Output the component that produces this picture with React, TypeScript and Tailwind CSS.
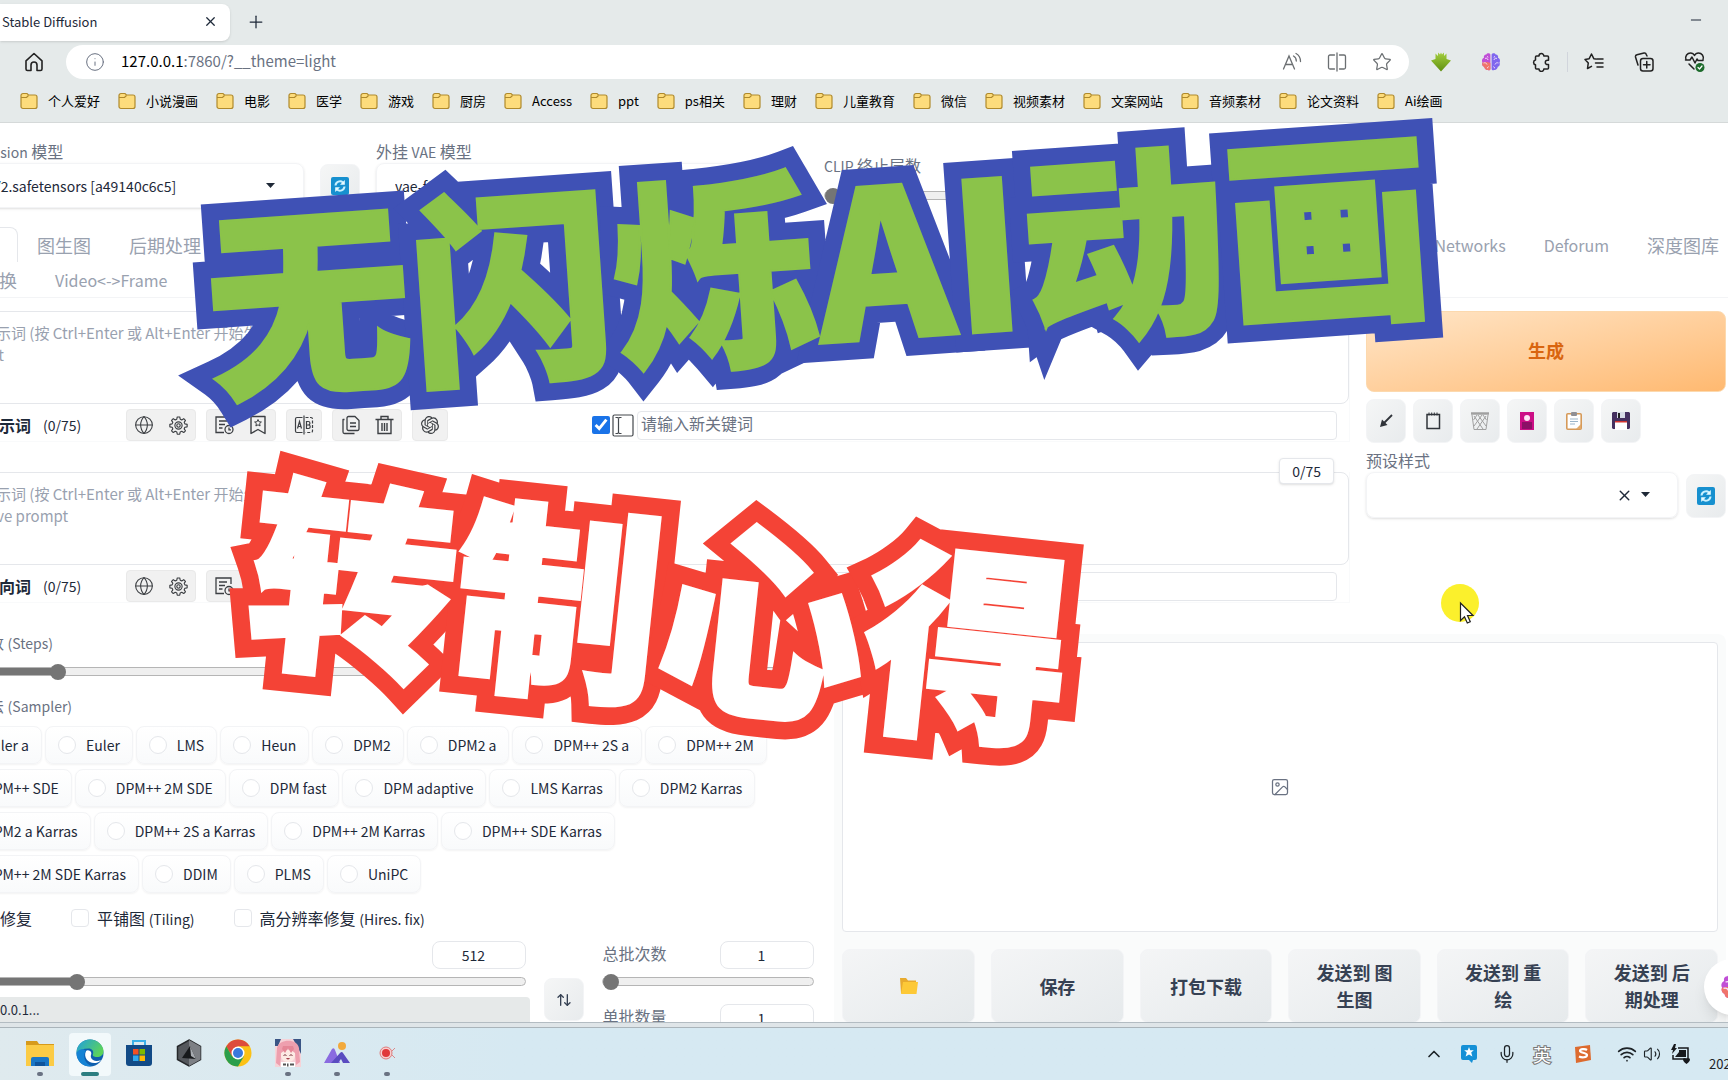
import React, { useState } from 'react';
import {
  ArrowDownUp,
  ChevronUp,
  Globe,
  Image as ImageIcon,
  Info,
  Mic,
  Minus,
  Plus,
  Star,
  Volume2,
  Wifi,
  X,
} from 'lucide-react';
import { SiOpenai } from 'react-icons/si';

const BOOKMARKS = [
  '个人爱好', '小说漫画', '电影', '医学', '游戏', '厨房', 'Access', 'ppt', 'ps相关',
  '理财', '儿童教育', '微信', '视频素材', '文案网站', '音频素材', '论文资料', 'Ai绘画',
];

const SAMPLERS = [
  ['Euler a', 'Euler', 'LMS', 'Heun', 'DPM2', 'DPM2 a', 'DPM++ 2S a', 'DPM++ 2M'],
  ['DPM++ SDE', 'DPM++ 2M SDE', 'DPM fast', 'DPM adaptive', 'LMS Karras', 'DPM2 Karras'],
  ['DPM2 a Karras', 'DPM++ 2S a Karras', 'DPM++ 2M Karras', 'DPM++ SDE Karras'],
  ['DPM++ 2M SDE Karras', 'DDIM', 'PLMS', 'UniPC'],
];

/* ---------- icons ---------- */

const FolderIcon = () => (
  <svg width="18" height="18" viewBox="0 0 18 18" className="shrink-0">
    <path d="M1 3.500a2 2 0 0 1 2-2h4l1.500 1.500H15a2 2 0 0 1 2 2V14.500a2 2 0 0 1-2 2H3a2 2 0 0 1-2-2z" fill="#fddc7c" stroke="#b08a2c" strokeWidth="1.2" />
    <path d="M1 5.500h5.500L8.500 3.500" fill="none" stroke="#b08a2c" strokeWidth="1.2" />
  </svg>
);

const HomeIcon = () => (
  <svg width="20" height="20" viewBox="0 0 20 20" fill="none" stroke="#222" strokeWidth="1.6" strokeLinejoin="round">
    <path d="M2 8.800 10 1.500l8 7.300V17a1.500 1.500 0 0 1-1.500 1.500H13v-5.500a3 3 0 0 0-6 0v5.500H3.500A1.500 1.500 0 0 1 2 17z" />
  </svg>
);

const ReadAloudIcon = () => (
  <svg width="20" height="20" viewBox="0 0 20 20" fill="none" stroke="#6b6f72" strokeWidth="1.3" strokeLinecap="round">
    <path d="M1.500 17 7 4l5.500 13M3.500 12.500h7M11.500 4c1.800 1 2.800 2.800 2.800 5M14 1.500c2.800 1.500 4.500 4.200 4.500 8" />
  </svg>
);

const SplitIcon = () => (
  <svg width="20" height="20" viewBox="0 0 20 20" fill="none" stroke="#6b6f72" strokeWidth="1.3" strokeLinecap="round">
    <path d="M7.500 3H3a1.500 1.500 0 0 0-1.500 1.500v11A1.500 1.500 0 0 0 3 17h4.500M12.500 3H17a1.500 1.500 0 0 1 1.500 1.500v11A1.500 1.500 0 0 1 17 17h-4.500M10 1v18" />
  </svg>
);

const PuzzleIcon = () => (
  <svg width="20" height="20" viewBox="0 0 20 20" fill="none" stroke="#222" strokeWidth="1.5" strokeLinejoin="round">
    <path d="M8 4a2.400 2.400 0 0 1 4.800 0h3.700a1 1 0 0 1 1 1v3.200h-1a2.200 2.200 0 0 0 0 4.400h1V16a1 1 0 0 1-1 1h-3.700a2.400 2.400 0 0 1-4.800 0H5.500a1 1 0 0 1-1-1v-3.200a2.400 2.400 0 0 1 0-4.700V5a1 1 0 0 1 1-1z" />
  </svg>
);

const DownloadArrowIcon = () => (
  <svg width="20" height="20" viewBox="0 0 20 20">
    <defs>
      <linearGradient id="dl" x1="0" y1="0" x2="0" y2="1">
        <stop offset="0" stopColor="#a4cf3e" />
        <stop offset="1" stopColor="#5f8f10" />
      </linearGradient>
    </defs>
    <path d="M4.500 1.500 7 4V.5l2 2 1-2 1 2 2-2V4l2.500-2.500V7L20 8.500 10 19.500 0 8.500 4.500 7z" fill="url(#dl)" />
  </svg>
);

const BrainIcon = ({ size = 20 }: { size?: number }) => (
  <svg width={size} height={size} viewBox="0 0 20 20">
    <path d="M9.400 2.500C8.800.7 6 .7 5.300 2.400 3.200 2.400 2.400 4.300 3 5.800 1 6.600.4 9 1.500 10.500.6 12.300 1.500 14.300 3.200 14.800c.2 2.200 2 3.400 3.700 3.100 1 .8 2.500.2 2.500-1z" fill="#c04fd6" />
    <path d="M1.500 10.500C.6 12.300 1.500 14.300 3.200 14.800c.2 2.200 2 3.400 3.700 3.100 1 .8 2.500.2 2.500-1V11C7 10 4 9.500 1.500 10.500z" fill="#f0746b" />
    <path d="M10.600 2.500c.6-1.800 3.400-1.800 4.100-.1 2.100 0 2.900 1.900 2.300 3.400 2 .8 2.600 3.200 1.500 4.700.9 1.800 0 3.800-1.700 4.300-.2 2.200-2 3.400-3.700 3.100-1 .8-2.500.2-2.500-1z" fill="#7f66ee" />
    <path d="M4 6.500c1.500-.8 2.800 0 3 1.500M2.500 11c1.500-.6 3 0 3.500 1.500M16 6.500c-1.500-.8-2.800 0-3 1.500M17.500 11c-1.500-.6-3 0-3.500 1.500M6 4c.6.4 1 1 1 1.600M14 4c-.6.4-1 1-1 1.600M6 16c.8-.2 1.300-.8 1.500-1.500M14 16c-.8-.2-1.300-.8-1.500-1.500" fill="none" stroke="#f5e4fb" strokeWidth=".9" />
  </svg>
);

const FavListIcon = () => (
  <svg width="20" height="20" viewBox="0 0 20 20" fill="none" stroke="#222" strokeWidth="1.500" strokeLinecap="round" strokeLinejoin="round">
    <path d="M12 7 9.800 6.700 7.500 2 5.200 6.700 1 7.400l3.300 3.500-.8 5.600 4-2.200M13 7h6M11.500 11H19M13 15h6" />
  </svg>
);

const CollectionsIcon = () => (
  <svg width="20" height="20" viewBox="0 0 20 20" fill="none" stroke="#222" strokeWidth="1.500" strokeLinecap="round">
    <rect x="6.500" y="6.500" width="12.500" height="12.500" rx="2.500" />
    <path d="M12.750 9.500v6.500M9.500 12.750H16M4 13 1.500 5A2 2 0 0 1 3 2.700l7-1.600A2 2 0 0 1 12.300 2.500L13 4" />
  </svg>
);

const HealthIcon = () => (
  <svg width="22" height="22" viewBox="0 0 22 22" fill="none" stroke="#222" strokeWidth="1.500" strokeLinecap="round" strokeLinejoin="round">
    <path d="M2 9C.5 5 3.500 2 6.500 2 8.500 2 10 3.500 10.500 4.500 11 3.500 12.500 2 14.500 2c3 0 6 3 4.500 7M1.500 9H6l2-3 3 6 2-4 1 1.500h5M5 13l5 5" />
    <circle cx="16" cy="16.500" r="4.500" fill="#1d6b2c" stroke="none" />
    <path d="m14 16.500 1.500 1.500 2.500-3" stroke="#fff" strokeWidth="1.200" />
  </svg>
);

const RefreshEmoji = () => (
  <svg width="18" height="18" viewBox="0 0 18 18">
    <rect width="18" height="18" rx="2" fill="#1790cf" />
    <path d="M4.500 8.500a4.500 4.500 0 0 1 7.500-3M13.500 9.500a4.500 4.500 0 0 1-7.500 3" fill="none" stroke="#c9f1ff" strokeWidth="2" />
    <path d="M13.800 3v4.800H9zM4.200 15v-4.800H9z" fill="#e6faff" />
  </svg>
);

const GearIcon = () => (
  <svg width="19" height="19" viewBox="0 0 20 20" fill="none" stroke="#3c3f43" strokeWidth="1.200" strokeLinejoin="round">
    <path d="M8.700 1h2.600l.5 2.400 1.600.7 2.100-1.300 1.800 1.800-1.300 2.100.7 1.600 2.400.5v2.600l-2.400.5-.7 1.600 1.300 2.100-1.800 1.800-2.100-1.300-1.600.7-.5 2.400H8.700l-.5-2.400-1.600-.7-2.100 1.300-1.800-1.800L4 13.500l-.7-1.600L.9 11.400V8.800l2.400-.5L4 6.700 2.700 4.600l1.800-1.800 2.100 1.300 1.600-.7z" />
    <circle cx="10" cy="10" r="3.800" />
    <circle cx="10" cy="10" r="1.800" />
  </svg>
);

const HistoryIcon = () => (
  <svg width="20" height="20" viewBox="0 0 20 20" fill="none" stroke="#3c3f43" strokeWidth="1.300">
    <path d="M17 8V2H2v15.500h8M5 6h8M5 9.500h6M5 13h3.500" />
    <circle cx="15" cy="14.500" r="4" />
    <path d="M15 12.500v2.300h2" />
  </svg>
);

const BookmarkStarIcon = () => (
  <svg width="18" height="20" viewBox="0 0 18 20" fill="none" stroke="#3c3f43" strokeWidth="1.400">
    <path d="M2 1.500h14v17L9 14.500l-7 4z" strokeLinejoin="round" />
    <path d="m9 4.500 1 2.300 2.400.2-1.800 1.600.5 2.400L9 9.800 6.900 11l.5-2.400L5.600 7l2.400-.2z" strokeWidth="1" />
  </svg>
);

const TranslateIcon = () => (
  <svg width="20" height="20" viewBox="0 0 20 20" fill="none" stroke="#3c3f43" strokeWidth="1.200">
    <path d="M8.500 2.500H3A1.500 1.500 0 0 0 1.500 4v12A1.500 1.500 0 0 0 3 17.500h5.500M10 .5v19" />
    <path d="M11.500 2.500H17A1.500 1.500 0 0 1 18.500 4v12a1.500 1.500 0 0 1-1.500 1.500h-5.500" strokeDasharray="3 1.500" />
    <path d="m3.500 13.500 2-7 2 7M4.200 11.500h2.600M12.500 6.500v7h2c2.300 0 2.300-3.500 0-3.500h-2 1.800c2.200 0 2.200-3.500 0-3.500z" />
  </svg>
);

const CopyIcon = () => (
  <svg width="19" height="20" viewBox="0 0 19 20" fill="none" stroke="#3c3f43" strokeWidth="1.300" strokeLinejoin="round">
    <path d="M7.500 1.500H14l4 4V14a1.500 1.500 0 0 1-1.500 1.500h-9A1.500 1.500 0 0 1 6 14V3a1.500 1.500 0 0 1 1.500-1.500zM9 8h6M9 11.500h6M3.500 4.500H2V17a1.500 1.500 0 0 0 1.500 1.500H13.500" />
  </svg>
);

const TrashIcon = () => (
  <svg width="19" height="20" viewBox="0 0 19 20" fill="none" stroke="#3c3f43" strokeWidth="1.400">
    <path d="M.5 4.500h18M6 4V1.500h7V4M3 5v13.500h13V5M7 8v8M9.500 8v8M12 8v8" />
  </svg>
);

const ArrowIcon = () => (
  <svg width="14" height="14" viewBox="0 0 14 14" fill="none" stroke="#30343a" strokeWidth="1.800">
    <path d="M13 1 3 11" />
    <path d="M1 13 3 5.500 8.500 11z" fill="#30343a" stroke="none" />
  </svg>
);

const NotepadIcon = () => (
  <svg width="17" height="18" viewBox="0 0 17 18" fill="none" stroke="#30343a" strokeWidth="1.500">
    <rect x="2" y="2.500" width="12.500" height="14" />
    <path d="M4 .5v3M6.700.5v3M9.300.5v3M12 .5v3" strokeWidth="1" />
  </svg>
);

const BinEmoji = () => (
  <svg width="18" height="18" viewBox="0 0 18 18" fill="none" stroke="#a0a0a0" strokeWidth="1">
    <path d="M0 1.500h18" strokeWidth="2.500" />
    <path d="M1 3l2 14.500h12L17 3M3 4l9 13M7 3l8 11M12 3l3.500 5M15 4 6 17M11 3 3 14M6 3 2.500 8" />
  </svg>
);

const CardEmoji = () => (
  <svg width="14" height="18" viewBox="0 0 14 18">
    <rect width="14" height="18" fill="#cc0f86" />
    <path d="M2 10h10v7H2z" fill="#8c0f66" />
    <circle cx="7" cy="6" r="3" fill="#ffe6f5" />
  </svg>
);

const ClipboardEmoji = () => (
  <svg width="16" height="18" viewBox="0 0 16 18">
    <rect x=".8" y="1.800" width="14.400" height="15.400" rx="1" fill="#fff" stroke="#d69a59" strokeWidth="1.600" />
    <rect x="5" width="6" height="4" rx="1" fill="#8f8f94" />
    <path d="M4 7h8M4 9.500h8M4 12h5" stroke="#9bb5ca" />
    <path d="M10 17l5-5v5z" fill="#e2a96a" />
  </svg>
);

const FloppyEmoji = () => (
  <svg width="18" height="18" viewBox="0 0 18 18">
    <path d="M1 0h16l1 1v15l-1 1H1l-1-1V1z" fill="#45305f" />
    <path d="M5 0h8v6H5z" fill="#d8dbe6" />
    <path d="M6 1h2v5H6z" fill="#222" />
    <path d="M3 9h12v9H3z" fill="#fff" />
    <path d="M3 9h12v1.500H3z" fill="#d3332f" />
  </svg>
);

const Caret = () => (
  <svg width="9" height="6" viewBox="0 0 9 6" className="pointer-events-none shrink-0">
    <path d="M0 0h9L4.500 5z" fill="#1f2937" />
  </svg>
);

/* ---------- shared controls ---------- */

interface SliderProps {
  id: string;
  label: string;
  min: number;
  max: number;
  initial: number;
}

const Slider: React.FC<SliderProps> = ({ id, label, min, max, initial }) => {
  const [value, setValue] = useState(initial);
  const percent = ((value - min) / (max - min)) * 100;

  return (
    <input
      id={id}
      type="range"
      aria-label={label}
      min={min}
      max={max}
      value={value}
      onChange={(e) => setValue(Number(e.target.value))}
      style={{ backgroundImage: `linear-gradient(to right, #757575 ${percent}%, #efefef ${percent}%)` }}
      className="block w-full h-[9px] appearance-none rounded-full border border-[#b5b5b5] [&::-webkit-slider-thumb]:appearance-none [&::-webkit-slider-thumb]:w-4 [&::-webkit-slider-thumb]:h-4 [&::-webkit-slider-thumb]:rounded-full [&::-webkit-slider-thumb]:bg-[#757575]"
    />
  );
};

const NumberBox = ({ label, value }: { label: string; value: string }) => (
  <input
    aria-label={label}
    defaultValue={value}
    className="w-[94px] h-7 pr-3 rounded-lg border border-gray-200 bg-white text-center text-sm text-gray-800"
  />
);

const RefreshButton = () => (
  <button
    type="button"
    aria-label="刷新"
    className="w-10 h-11 shrink-0 flex items-center justify-center rounded-lg border border-gray-100 bg-gradient-to-br from-[#f5f6f6] to-[#e8ebed]"
  >
    <RefreshEmoji />
  </button>
);

const ToolGroup = ({ children }: { children: React.ReactNode }) => (
  <div className="h-8 flex items-center rounded border border-[#e9e9e9] bg-[#f1f1f1]">{children}</div>
);

const ToolButton = ({ label, children }: { label: string; children: React.ReactNode }) => (
  <button type="button" aria-label={label} className="w-[34px] h-full flex items-center justify-center text-[#3c3f43]">
    {children}
  </button>
);

/* ---------- browser chrome ---------- */

const BrowserHeader = () => (
  <header className="shrink-0 bg-[#e5eaea] border-b border-[#d5d9d9]">
    <div className="h-[41px] flex items-start justify-between">
      <div className="flex items-center h-[41px] pt-1">
        <div className="w-[230px] h-full flex items-center justify-between pl-0.5 pr-3 pb-0.5 bg-white rounded-r-lg shadow">
          <span className="text-[13px] leading-5">Stable Diffusion</span>
          <button type="button" aria-label="关闭标签页"><X size={15} strokeWidth={2} /></button>
        </div>
        <button type="button" aria-label="新建标签页" className="ml-4 pb-0.5"><Plus size={20} strokeWidth={1.5} /></button>
      </div>
      <button type="button" aria-label="最小化" className="mt-3 mr-6"><Minus size={16} strokeWidth={1.5} /></button>
    </div>

    <div className="h-[42px] flex items-center pl-6">
      <button type="button" aria-label="主页"><HomeIcon /></button>
      <div className="flex-1 h-[34px] ml-[22px] pl-[19px] pr-[17px] flex items-center rounded-full bg-white">
        <Info size={20} strokeWidth={1.2} className="text-gray-500" />
        <span className="ml-4 pb-0.5 text-[15px] leading-5 text-gray-500">
          <span className="text-black">127.0.0.1</span>:7860/?__theme=light
        </span>
        <div className="ml-auto flex items-center gap-[25px] text-[#6b6f72]">
          <button type="button" aria-label="朗读"><ReadAloudIcon /></button>
          <button type="button" aria-label="分屏"><SplitIcon /></button>
          <button type="button" aria-label="收藏"><Star size={20} strokeWidth={1.500} /></button>
        </div>
      </div>
      <div className="flex items-center gap-[30px] pl-[22px] pr-[22px]">
        <DownloadArrowIcon />
        <BrainIcon />
        <PuzzleIcon />
        <span className="w-px h-5 -mx-3.5 bg-gray-300" />
        <FavListIcon />
        <CollectionsIcon />
        <HealthIcon />
      </div>
    </div>

    <nav className="h-[39px] pb-1 flex items-center gap-[18px] pl-5 whitespace-nowrap">
      {BOOKMARKS.map((name) => (
        <a key={name} href="#" className="flex items-center gap-2.5 text-[13px] leading-5 text-black">
          <FolderIcon />
          {name}
        </a>
      ))}
    </nav>
  </header>
);

/* ---------- web ui ---------- */

const QuickSettings = () => (
  <div className="flex items-end gap-4">
    <div className="w-[379px]">
      <label htmlFor="checkpoint" className="block leading-6 text-gray-500">
        <span className="text-sm">Stable Diffusion</span> 模型
      </label>
      <div className="h-[45px] pl-4 pr-7 flex items-center rounded-lg border border-gray-100 shadow-sm">
        <select id="checkpoint" className="flex-1 appearance-none text-sm leading-6 text-gray-800">
          <option>counterV2.safetensors [a49140c6c5]</option>
        </select>
        <Caret />
      </div>
    </div>
    <RefreshButton />
    <div className="w-[376px]">
      <label htmlFor="vae" className="block leading-6 text-gray-500">
        外挂 <span className="text-sm">VAE</span> 模型
      </label>
      <div className="h-[45px] px-[18px] flex items-center rounded-lg border border-gray-100 shadow-sm">
        <select id="vae" className="flex-1 appearance-none text-sm leading-6 text-gray-800">
          <option>vae-ft-mse-840000-ema-pruned</option>
        </select>
        <Caret />
      </div>
    </div>
    <RefreshButton />
    <div className="w-[440px] pb-2">
      <label htmlFor="clip" className="block mb-3.5 leading-6 text-gray-500">
        <span className="text-sm">CLIP</span> 终止层数
      </label>
      <Slider id="clip" label="CLIP 终止层数" min={1} max={12} initial={1} />
    </div>
  </div>
);

interface TabButtonProps {
  active?: boolean;
  latin?: boolean;
  children: React.ReactNode;
}

const TabButton: React.FC<TabButtonProps> = ({ active, latin, children }) => (
  <button
    type="button"
    role="tab"
    className={`h-[35px] px-[19px] leading-7 whitespace-nowrap ${latin ? 'text-base' : 'text-lg'} ${
      active ? 'rounded-t-lg border border-b-0 border-gray-200 text-gray-800' : 'text-gray-400'
    }`}
  >
    {children}
  </button>
);

const Tabs = () => (
  <div role="tablist" className="-ml-px -mr-3 mt-[19px] border-b border-gray-100">
    <div className="flex justify-between">
      <div className="flex">
        <TabButton active>文生图</TabButton>
        <TabButton>图生图</TabButton>
        <TabButton>后期处理</TabButton>
        <TabButton>PNG 图片信息</TabButton>
        <TabButton>模型合并</TabButton>
        <TabButton>训练</TabButton>
        <TabButton>OpenPose 编辑器</TabButton>
        <TabButton>3D 骨架模型编辑</TabButton>
      </div>
      <div className="flex">
        <TabButton latin>Additional Networks</TabButton>
        <TabButton latin>Deforum</TabButton>
        <TabButton>深度图库</TabButton>
      </div>
    </div>
    <div className="flex pl-0.5">
      <TabButton>模型转换</TabButton>
      <TabButton latin>Video&lt;-&gt;Frame</TabButton>
    </div>
  </div>
);

interface PromptProps {
  id: string;
  title: string;
  placeholder: string;
}

const PromptBlock: React.FC<PromptProps> = ({ id, title, placeholder }) => (
  <section className="border-b border-r border-gray-50">
    <textarea
      id={id}
      aria-label={title}
      placeholder={placeholder}
      className="block w-full h-[93px] resize-none rounded-lg border border-gray-200 px-[13px] py-2.5 text-[15px] leading-[22px] placeholder:text-gray-400"
    />
    <div className="mt-[5px] flex items-center">
      <h2 className="w-[189px] pl-[46px] flex items-center gap-3 text-base leading-6 font-bold text-gray-800 whitespace-nowrap">
        {title}
        <span className="text-sm leading-6 font-normal">(0/75)</span>
      </h2>
      <div className="w-[466px] flex gap-2.5">
        <ToolGroup>
          <ToolButton label="语言"><Globe size={20} strokeWidth={1.300} /></ToolButton>
          <ToolButton label="设置"><GearIcon /></ToolButton>
        </ToolGroup>
        <ToolGroup>
          <ToolButton label="历史"><HistoryIcon /></ToolButton>
          <ToolButton label="收藏夹"><BookmarkStarIcon /></ToolButton>
        </ToolGroup>
        <ToolGroup>
          <ToolButton label="翻译"><TranslateIcon /></ToolButton>
        </ToolGroup>
        <ToolGroup>
          <ToolButton label="复制"><CopyIcon /></ToolButton>
          <ToolButton label="删除"><TrashIcon /></ToolButton>
        </ToolGroup>
        <ToolGroup>
          <ToolButton label="ChatGPT"><SiOpenai size={18} /></ToolButton>
        </ToolGroup>
      </div>
      <input type="checkbox" defaultChecked aria-label="启用输入" className="w-[18px] h-[18px] accent-[#1a73e8]" />
      <svg width="22" height="23" viewBox="0 0 22 23" fill="none" stroke="#44484d" strokeWidth="1.200" className="ml-0.5 mr-[3px]">
        <rect x="1" y="1" width="20" height="21" rx="1.500" />
        <path d="M3.500 3.500h2l1 .8 1-.8h2M6.500 4v15M3.500 19.500h2l1-.8 1 .8h2" />
      </svg>
      <input
        aria-label={`${title}关键词`}
        placeholder="请输入新关键词"
        className="flex-1 h-[29px] mr-3 px-[3px] pb-1 rounded border border-gray-200 text-base placeholder:text-gray-500"
      />
    </div>
  </section>
);

const ActionPanel = () => (
  <aside className="w-[360px] shrink-0">
    <button
      type="button"
      className="w-full h-[81px] pb-1 rounded-lg border border-[#fcd9ae] bg-gradient-to-br from-[#ffe6c8] to-[#ffb970] text-lg font-bold text-[#d9650f]"
    >
      生成
    </button>
    <div className="mt-[7px] flex gap-[7px]">
      {[
        ['读取参数', <ArrowIcon key="i" />],
        ['记事本', <NotepadIcon key="i" />],
        ['清空', <BinEmoji key="i" />],
        ['附加网络', <CardEmoji key="i" />],
        ['应用样式', <ClipboardEmoji key="i" />],
        ['保存样式', <FloppyEmoji key="i" />],
      ].map(([label, icon]) => (
        <button
          key={label as string}
          type="button"
          aria-label={label as string}
          className="w-10 h-11 flex items-center justify-center rounded-lg border border-gray-100 bg-gradient-to-br from-[#f5f6f6] to-[#e8ebed] text-gray-800"
        >
          {icon}
        </button>
      ))}
    </div>
    <label htmlFor="styles" className="block mt-[5px] leading-6 text-gray-500">预设样式</label>
    <div className="flex items-end gap-2">
      <div className="flex-1 h-[46px] pr-[27px] flex items-center justify-end gap-2 rounded-lg border border-gray-100 shadow-sm">
        <input id="styles" className="flex-1 h-full min-w-0" />
        <button type="button" aria-label="清除"><X size={17} strokeWidth={2} /></button>
        <Caret />
      </div>
      <RefreshButton />
    </div>
  </aside>
);

const SamplerOption = ({ name }: { name: string }) => (
  <label className="h-[38px] px-3 flex items-center gap-2.5 rounded-lg border border-gray-100 bg-gradient-to-b from-white to-gray-50 shadow-xs text-sm leading-6 text-gray-800 whitespace-nowrap">
    <input
      type="radio"
      name="sampler"
      defaultChecked={name === 'Euler a'}
      className="w-[18px] h-[18px] appearance-none rounded-full border border-gray-200 bg-white checked:bg-blue-600"
    />
    {name}
  </label>
);

const OptionCheck = ({ name, latin }: { name: string; latin?: string }) => (
  <label className="flex items-center gap-2 leading-6 text-gray-800 whitespace-nowrap">
    <input type="checkbox" className="w-[18px] h-[18px] appearance-none rounded border border-gray-200 bg-white" />
    <span>
      {name} {latin && <span className="text-sm">{latin}</span>}
    </span>
  </label>
);

const BatchField = ({ id, name, max }: { id: string; name: string; max: number }) => (
  <div>
    <div className="mb-2 flex items-start justify-between">
      <label htmlFor={id} className="leading-6 text-gray-500">{name}</label>
      <NumberBox label={`${name}数值`} value="1" />
    </div>
    <Slider id={id} label={name} min={1} max={max} initial={1} />
  </div>
);

const SettingsPanel = () => (
  <section className="w-[49.5%] shrink-0 pl-[15px] pr-0.5">
    <label htmlFor="steps" className="block mb-[13px] leading-6 text-gray-500">
      迭代步数 <span className="text-sm">(Steps)</span>
    </label>
    <Slider id="steps" label="迭代步数" min={1} max={150} initial={20} />

    <fieldset className="mt-[17px]">
      <legend className="leading-6 text-gray-500">
        采样方法 <span className="text-sm">(Sampler)</span>
      </legend>
      <div className="mt-[9px] pl-[3px] flex flex-col gap-[5px]">
        {SAMPLERS.map((row) => (
          <div key={row[0]} className="flex gap-[3px]">
            {row.map((name) => <SamplerOption key={name} name={name} />)}
          </div>
        ))}
      </div>
    </fieldset>

    <div className="mt-[13px] pl-0.5 flex gap-[39px]">
      <OptionCheck name="面部修复" />
      <OptionCheck name="平铺图" latin="(Tiling)" />
      <OptionCheck name="高分辨率修复" latin="(Hires. fix)" />
    </div>

    <div className="mt-[11px] flex gap-[18px]">
      <div className="flex-1">
        <div className="mb-2 flex items-start justify-between">
          <label htmlFor="width" className="leading-6 text-gray-500">宽度</label>
          <NumberBox label="宽度数值" value="512" />
        </div>
        <Slider id="width" label="宽度" min={64} max={2048} initial={512} />
      </div>
      <button
        type="button"
        aria-label="交换宽高"
        className="w-10 h-[43px] mt-[37px] flex items-center justify-center rounded-lg border border-gray-100 bg-gradient-to-br from-[#f5f6f6] to-[#e8ebed] text-gray-700"
      >
        <ArrowDownUp size={16} className="-scale-x-100" />
      </button>
      <div className="w-[212px] flex flex-col gap-[18px]">
        <BatchField id="batch-count" name="总批次数" max={100} />
        <BatchField id="batch-size" name="单批数量" max={8} />
      </div>
    </div>
  </section>
);

const SendButton = ({ children }: { children: React.ReactNode }) => (
  <button
    type="button"
    className="flex-1 h-[74px] px-6 rounded-lg border border-gray-100 bg-gradient-to-br from-[#f4f5f6] to-[#e6eaec] flex items-center justify-center text-center text-lg leading-[27px] font-bold text-gray-700"
  >
    {children}
  </button>
);

const OutputPanel = () => (
  <section className="flex-1 mt-1 p-2 rounded-lg bg-[#fafbfb]">
    <div className="h-[290px] flex items-center justify-center rounded-sm border border-gray-200 bg-white">
      <ImageIcon size={20} strokeWidth={1.500} className="text-gray-500" />
    </div>
    <div className="mt-[17px] flex gap-4">
      <SendButton>
        <svg width="18" height="18" viewBox="0 0 18 18" aria-label="打开文件夹">
          <path d="M0 1h6l2 2.500h8V16H1z" fill="#e8ab2e" />
          <path d="M3 5h15l-1.500 12H1z" fill="#fdc937" />
        </svg>
      </SendButton>
      <SendButton>保存</SendButton>
      <SendButton>打包下载</SendButton>
      <SendButton>发送到 图<br />生图</SendButton>
      <SendButton>发送到 重<br />绘</SendButton>
      <SendButton>发送到 后<br />期处理</SendButton>
    </div>
  </section>
);

const WebUi = () => (
  <main className="relative flex-1 min-h-0 overflow-hidden bg-white">
    <div className="-ml-[75px] pt-4 pr-0.5">
      <QuickSettings />
      <Tabs />
      <div className="mt-[13px] pl-3 flex gap-4">
        <div className="relative flex-1 flex flex-col gap-[30px]">
          <PromptBlock id="prompt" title="提示词" placeholder={'正向提示词 (按 Ctrl+Enter 或 Alt+Enter 开始生成)\nPrompt'} />
          <PromptBlock id="negative" title="反向词" placeholder={'反向提示词 (按 Ctrl+Enter 或 Alt+Enter 开始生成)\nNegative prompt'} />
          <span className="absolute right-4 top-[147px] px-3 rounded border border-gray-200 bg-white shadow text-sm leading-6 text-gray-800">
            0/75
          </span>
        </div>
        <ActionPanel />
      </div>
      <div className="mt-[27px] flex gap-[18px]">
        <SettingsPanel />
        <OutputPanel />
      </div>
    </div>

    {/* link status bubble */}
    <div className="absolute left-0 bottom-0 w-[530px] h-[25px] rounded-tr bg-[#e6e9e9] text-[13px] leading-[25px] text-gray-800">
      0.0.1...
    </div>
    <div className="absolute -right-8 bottom-[7px] w-14 h-14 flex items-center pl-4 rounded-full bg-white shadow-lg">
      <BrainIcon size={28} />
    </div>
  </main>
);

/* ---------- taskbar ---------- */

const TaskItem = ({ label, active, open, children }: { label: string; active?: boolean; open?: boolean; children: React.ReactNode }) => (
  <button
    type="button"
    aria-label={label}
    className={`w-[42px] h-[43px] pt-1.5 flex flex-col items-center justify-between rounded ${active ? 'bg-[#f2f9fb]' : ''}`}
  >
    {children}
    <span className={`h-1 rounded-full ${active ? 'w-[18px] bg-[#2b7d80]' : open ? 'w-1.5 bg-gray-500' : 'w-1.5'}`} />
  </button>
);

const Taskbar = () => (
  <footer className="shrink-0 h-[58px] border-t border-[#b3bcc2] bg-gradient-to-r from-[#dfeaee] to-[#d6e9f2] to-30% flex flex-col">
    <div className="h-1 shrink-0 bg-[#dfe5e8] border-b border-[#aab4ba] box-content" />
    <div className="flex-1 flex items-center justify-between">
      <div className="flex justify-between w-[408px] pl-[19px]">
        <TaskItem label="文件资源管理器" open>
          <svg width="28" height="28" viewBox="0 0 28 28">
            <path d="M0 2h11l2 3h15v22H0z" fill="#d79a1b" />
            <path d="M0 6h28v21H0z" fill="#fbcb45" />
            <path d="M5 20a2 2 0 0 1 2-2h14a2 2 0 0 1 2 2v7H5z" fill="#1976c5" />
            <path d="M9 23h10v4H9z" fill="#0f549b" />
          </svg>
        </TaskItem>
        <TaskItem label="Edge" active>
          <svg width="28" height="28" viewBox="0 0 28 28">
            <defs>
              <linearGradient id="edge" x1="0" y1="0" x2="1" y2=".5">
                <stop offset="0" stopColor="#1f9ee0" />
                <stop offset="1" stopColor="#5bd35c" />
              </linearGradient>
            </defs>
            <circle cx="14" cy="14" r="13.500" fill="#0f5fae" />
            <path d="M.5 13C1 5.500 7 .5 14 .5S27.500 6 27.500 12c0 4-3 6-6.500 6-3 0-5-1-4-3 1-3-1-5.500-4.500-5.500C7 9.500 3 11 .5 14z" fill="url(#edge)" />
            <path d="M10 12c-3 6 2 13 10 12 2-.3 4-1.500 5-3-4 2-9 1-10-2.500-.6-2 .5-3 .3-4.500-.3-2.500-4-3.500-5.300-2z" fill="#fff" />
            <path d="M10 12c-4 5-1 13 6 15C6 29 .5 21 .5 14 3 9.500 8 9.500 10 12z" fill="#1583d4" />
          </svg>
        </TaskItem>
        <TaskItem label="应用商店">
          <svg width="26" height="28" viewBox="0 0 26 28">
            <path d="M7 6V2h12v4" fill="none" stroke="#3bb0e8" strokeWidth="2" />
            <path d="M0 6h26v18a3 3 0 0 1-3 3H3a3 3 0 0 1-3-3z" fill="#124a86" />
            <path d="M7 10h5.500v5.500H7z" fill="#f25022" />
            <path d="M13.500 10H19v5.500h-5.500z" fill="#7fba00" />
            <path d="M7 16.500h5.500V22H7z" fill="#2fa8ee" />
            <path d="M13.500 16.500H19V22h-5.500z" fill="#ffb900" />
          </svg>
        </TaskItem>
        <TaskItem label="启动器">
          <svg width="26" height="28" viewBox="0 0 26 28">
            <path d="M13 1 24.500 7.500v13L13 27 1.500 20.500v-13z" fill="#55585d" stroke="#26282b" strokeWidth="1.500" />
            <path d="M13 1 24.500 7.500v13L13 27z" fill="#7d8085" />
            <path d="M14 7 20 20 6 19z" fill="#17191c" />
            <path d="m14 7 6 13-5-3z" fill="#a7abb0" />
          </svg>
        </TaskItem>
        <TaskItem label="Chrome">
          <svg width="28" height="28" viewBox="0 0 28 28">
            <circle cx="14" cy="14" r="13.500" fill="#fbc116" />
            <path d="M2.300 7.250A13.500 13.500 0 0 1 25.700 7.250H14L8.150 17.400z" fill="#dd4b3c" />
            <path d="M2.300 7.250A13.500 13.500 0 0 0 14 27.500l5.850-10.100L8.150 17.400z" fill="#2b9e4b" />
            <circle cx="14" cy="14" r="6.500" fill="#fff" />
            <circle cx="14" cy="14" r="5" fill="#3a79dc" />
          </svg>
        </TaskItem>
        <TaskItem label="绘世启动器" open>
          <svg width="28" height="28" viewBox="0 0 28 28">
            <path d="M1 0h26v28H1z" fill="#f6d3d8" />
            <path d="M1 0h6l-3 7H1zM19 0h8v15l-4-8z" fill="#3a5585" />
            <path d="M3 9C5 0 23-1 25 9l1 14-4 3-1-11-4-5-7 4-3 3-1 10-4-3z" fill="#ee9fae" />
            <path d="M7 14q7-7 14 0c1 6-3 9-7 9s-8-3-7-9z" fill="#fdeae4" />
            <path d="m8 10 3 4 3-5 3 5 3-4-1-3H9z" fill="#e58797" />
            <path d="M9.500 16.500q1.500-1.500 3 0M15.500 16.500q1.500-1.500 3 0" fill="none" stroke="#7b3440" />
            <path d="M12 19h4q-2 3-4 0z" fill="#a2414d" />
            <path d="M7 23h14v5H7z" fill="#fff" />
            <path d="M9 24.500h3v2H9zM13 24.500h1.500v3H13zM16 24.500h4v2h-4z" fill="#555" />
          </svg>
        </TaskItem>
        <TaskItem label="图像工具" open>
          <svg width="28" height="28" viewBox="0 0 28 28">
            <circle cx="19" cy="7" r="4" fill="#f2a93c" />
            <path d="M1 24 9 10q2-2 3 1l5 13z" fill="#8a6be0" />
            <path d="m8 24 9-10q2-2 3 0l7 10h-7l-2-4-3 4z" fill="#5a4cc0" />
          </svg>
        </TaskItem>
        <TaskItem label="录屏" open>
          <svg width="28" height="28" viewBox="0 0 28 28">
            <circle cx="13" cy="14" r="6" fill="#f6cfcf" stroke="#e07c7c" />
            <circle cx="13" cy="14" r="4" fill="#e0393b" />
            <path d="m19 12 3-3M19 16l3 3" stroke="#d88" />
          </svg>
        </TaskItem>
      </div>

      <div className="flex items-center gap-[14px] text-[#1d2327]">
        <ChevronUp size={20} strokeWidth={2} />
        <svg width="16" height="18" viewBox="0 0 16 18" className="ml-[3px]">
          <path d="M2 0h12a2 2 0 0 1 2 2v11a2 2 0 0 1-2 2h-2l-1 3-3-3H2a2 2 0 0 1-2-2V2a2 2 0 0 1 2-2z" fill="#1590d6" />
          <path d="m8 2 1.200 3.200h3.600l-2.600 2.300 1.200 4L8 9.500l-3.400 2 1.200-4-2.600-2.300h3.600z" fill="#fff" />
        </svg>
        <Mic size={20} strokeWidth={1.500} className="ml-1.5" />
        <span className="ml-0.5 text-lg leading-6 text-white [-webkit-text-stroke:2px_#777] [paint-order:stroke_fill]">英</span>
        <svg width="20" height="20" viewBox="0 0 20 20" className="ml-2">
          <path d="M2 3 17 1l1 15-15 3z" fill="#dd6b2f" />
          <path d="M14 6c-2-1.500-7-1-7 1s7 1.500 7 4-5 3-8 1.500" fill="none" stroke="#fff" strokeWidth="2.200" />
        </svg>
        <Wifi size={20} strokeWidth={2} className="ml-2.5" />
        <Volume2 size={18} strokeWidth={1.500} className="-ml-2" />
        <svg width="20" height="20" viewBox="0 0 20 20" className="-ml-1">
          <path d="M7 4h10v11H2v-4" fill="none" stroke="#17191c" strokeWidth="1.500" />
          <path d="M8 6h7v7H4l4-5zM3 0 0 6h2l-1 4 5-6H4l1-4z" fill="#17191c" />
          <path d="M15.500 20c-6-4-3-7 0-5 3-2 6 1 0 5z" fill="#17191c" />
        </svg>
        <span className="w-[19px] mt-5 ml-1 overflow-hidden whitespace-nowrap text-[13px] leading-5">2023</span>
      </div>
    </div>
  </footer>
);

const App: React.FC = () => (
  <div className="relative h-screen flex flex-col overflow-hidden font-['Noto_Sans_CJK_SC',sans-serif] text-base text-gray-800">
    <BrowserHeader />
    <WebUi />
    <Taskbar />

    {/* cover titles: wide outline on the element, thickened glyphs in ::before */}
    <h1
      data-text="无闪烁AI动画"
      className="pointer-events-none absolute left-[204px] top-[152px] -rotate-4 whitespace-nowrap text-[204px] leading-[204px] font-black text-[#8bc34a] [-webkit-text-stroke:38px_#3f51b5] [paint-order:stroke_fill] before:absolute before:inset-0 before:content-[attr(data-text)] before:[-webkit-text-stroke:4px_#8bc34a]"
    >
      无闪烁AI动画
    </h1>
    <p
      data-text="转制心得"
      className="pointer-events-none absolute left-[250px] top-[498px] rotate-6 whitespace-nowrap text-[206px] leading-[206px] font-black text-white [-webkit-text-stroke:40px_#f44336] [paint-order:stroke_fill] before:absolute before:inset-0 before:content-[attr(data-text)] before:[-webkit-text-stroke:5px_#ffffff]"
    >
      转制心得
    </p>

    <svg width="44" height="44" viewBox="0 0 44 44" className="pointer-events-none absolute left-[1441px] top-[584px]">
      <circle cx="19" cy="19" r="19" fill="#fbf02c" />
      <path d="M19.500 19v17.500l4-3.800 2.800 6.300 3-1.300-2.800-6.200h5.500z" fill="#fff" stroke="#222" strokeWidth="1.200" />
    </svg>
  </div>
);

export default App;
